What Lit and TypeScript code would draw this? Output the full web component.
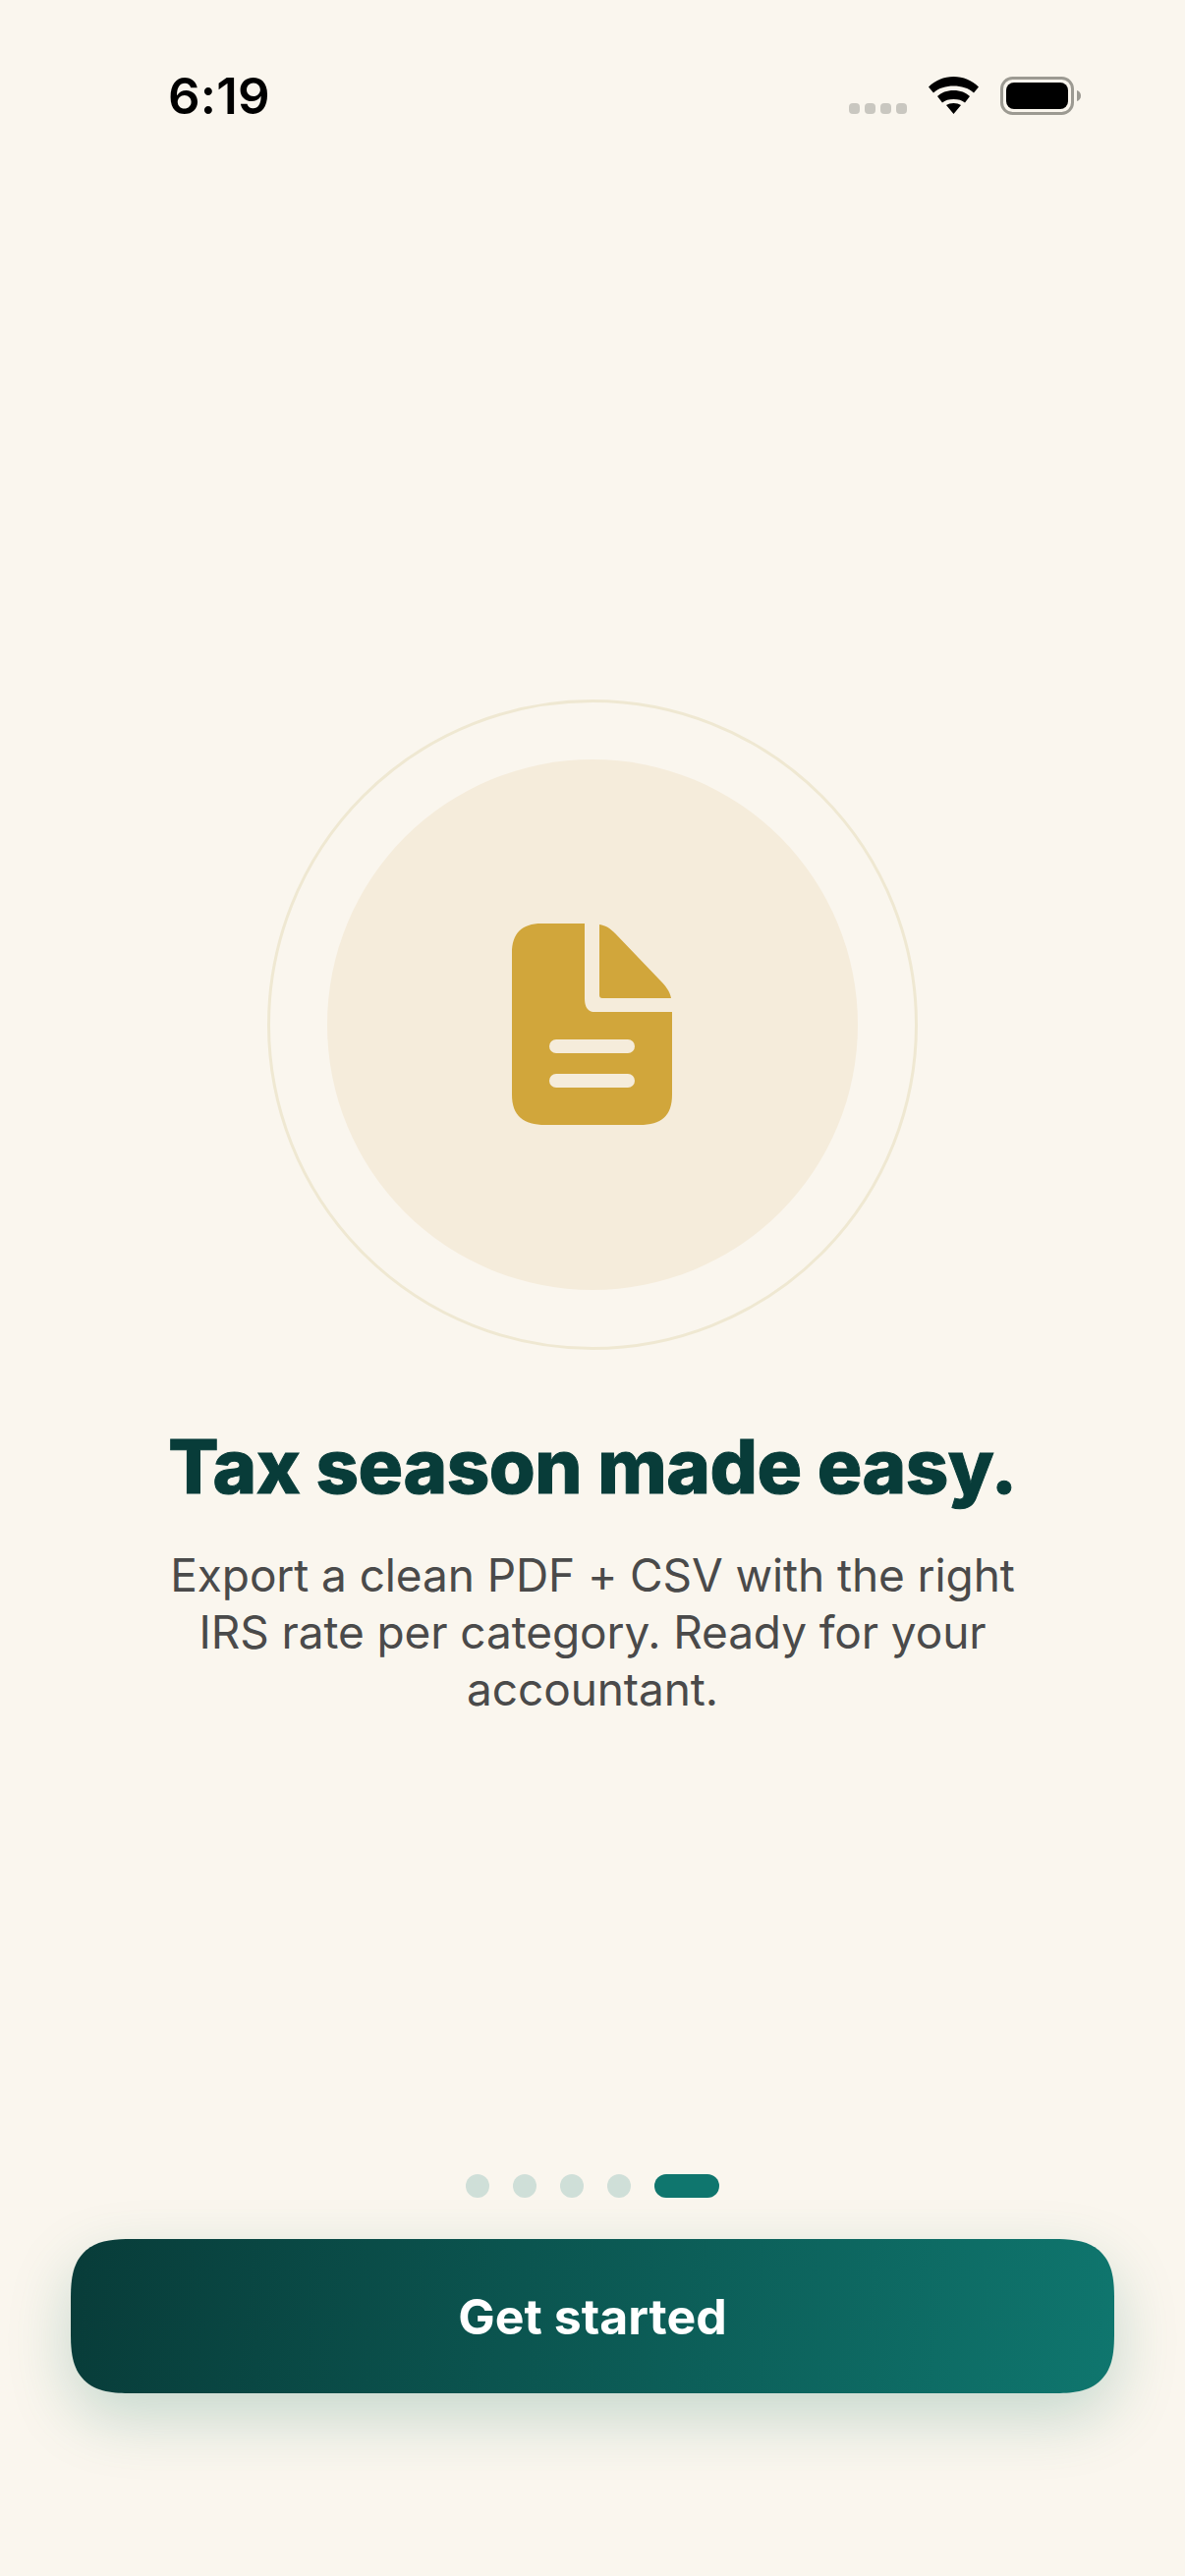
import { LitElement, html, css } from "lit";
import { customElement } from "lit/decorators.js";

@customElement("app-root")
export class AppRoot extends LitElement {
  static styles = css`
    :host { display: block; }
    .screen {
      width: 1206px; height: 2622px; background: #faf6ee; display: flex; flex-direction: column;
      font-family: Inter, "Liberation Sans", sans-serif; overflow: hidden;
    }
    .status { height: 712px; flex: none; display: flex; align-items: flex-start; justify-content: space-between; padding: 0 106px 0 171px; box-sizing: border-box; }
    .time { font-size: 51px; font-weight: 600; line-height: 60px; color: #000; margin-top: 68px; letter-spacing: 0.2px; }
    .sys { display: flex; align-items: flex-start; }
    .cell { display: flex; gap: 5px; margin-top: 105px; }
    .cell i { width: 11px; height: 11px; border-radius: 4px; background: #c9c7c0; display: block; }
    .wifi { width: 51px; height: 38px; margin: 78px 0 0 22px; display: block; }
    .battery { width: 82px; height: 39px; margin: 78px 0 0 22px; display: block; }
    .rings { width: 662px; height: 662px; border: 3px solid #efe8d2; box-sizing: border-box; border-radius: 50%; align-self: center; flex: none; display: flex; align-items: center; justify-content: center; }
    .inner { width: 540px; height: 540px; border-radius: 50%; background: #f5ecdb; display: flex; align-items: center; justify-content: center; }
    .doc { width: 164px; height: 206px; display: block; }
    h1 { margin: 74px 0 0; font-size: 76px; line-height: 88px; font-weight: 800; color: #083c39; text-align: center; letter-spacing: -0.5px; -webkit-text-stroke: 1px #083c39; }
    p { margin: 38px auto 0; width: 900px; font-size: 46px; line-height: 58px; font-weight: 400; color: #4a4a4a; text-align: center; letter-spacing: -0.1px; }
    .spacer { flex: 1; }
    .dots { display: flex; gap: 24px; justify-content: center; }
    .dots i { width: 24px; height: 24px; border-radius: 50%; background: #cfdfd8; display: block; }
    .dots i.on { width: 66px; border-radius: 12px; background: #0f766e; }
    .cta {
      margin: 42px 72px 186px; height: 157px; border-radius: 62px; corner-shape: superellipse(1.5); color: #fff; display: flex; align-items: center; justify-content: center;
      background: linear-gradient(97deg, #083c39, #0f766e); font: 650 50px Inter, "Liberation Sans", sans-serif;
      box-shadow: 0 24px 64px rgba(15, 110, 90, 0.22);
    }
  `;

  render() {
    return html`<div class="screen">
      <div class="status">
        <div class="time">6:19</div>
        <div class="sys">
          <div class="cell"><i></i><i></i><i></i><i></i></div>
          <svg class="wifi" viewBox="0 0 51 38"><path fill="#000" d="M25.500 0C15.500 0 7 3.700 0 10.500L5 16.500C10.500 11.500 17.500 9.500 25.500 9.500S40.500 11.500 46 16.500L51 10.500C44 3.700 35.500 0 25.500 0ZM25.500 14C18.500 14 13 16.300 9 20L14 26.500C17 24 20.500 23 25.500 23S34 24 37 26.500L42 20C38 16.300 32.500 14 25.500 14ZM25.500 27C22.500 27 20 27.800 18 29L25.500 38 33 29C31 27.800 28.500 27 25.500 27Z"/></svg>
          <svg class="battery" viewBox="0 0 82 39"><rect x="1.500" y="1.500" width="72" height="36" rx="11" fill="none" stroke="#9c9a92" stroke-width="3"/><rect x="6" y="6" width="63" height="27" rx="8" fill="#000"/><path d="M78 14c2.500.6 4 2.800 4 5.500s-1.500 4.900-4 5.500Z" fill="#9c9a92"/></svg>
        </div>
      </div>
      <div class="rings"><div class="inner">
        <svg class="doc" viewBox="0 0 164 206"><path fill="#d1a63b" d="M30 0H74V76C74 92 84 90 88 90H163V174C163 196 152 205 130 205H34C12 205 0 196 0 174V30C0 10 10 0 30 0Z"/><path fill="#d1a63b" d="M89 1C96 2 100 5 105 10L150 57C156 63 161 69 162 76H92C90 76 89 75 89 73Z"/><rect x="38" y="118" width="87" height="14" rx="7" fill="#f5ecdb"/><rect x="38" y="153" width="87" height="14" rx="7" fill="#f5ecdb"/></svg>
      </div></div>
      <h1>Tax season made easy.</h1>
      <p>Export a clean PDF + CSV with the right IRS rate per category. Ready for your accountant.</p>
      <div class="spacer"></div>
      <div class="dots"><i></i><i></i><i></i><i></i><i class="on"></i></div>
      <div class="cta">Get started</div>
    </div>`;
  }
}
